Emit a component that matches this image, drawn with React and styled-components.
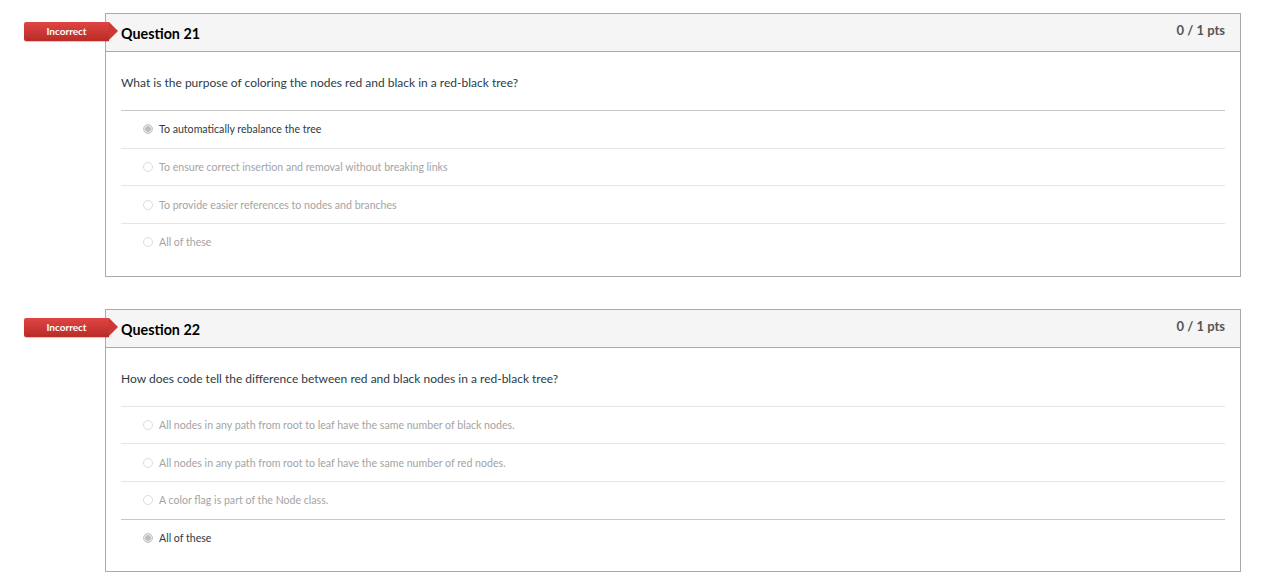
import React from "react";
import styled, { createGlobalStyle } from "styled-components";

const GlobalStyle = createGlobalStyle`
	body {
		margin: 0;
		background: #fff;
		font-family: Lato, "Liberation Sans", sans-serif;
		color: #2d3b45;
	}
`;

const Page = styled.div`
	padding: 13px 20px 12px 105px;
	display: flex;
	flex-direction: column;
	gap: 32px;
`;

const Box = styled.div`
	position: relative;
	border: 1px solid #aaaaaa;
	background: #fff;
`;

const Header = styled.div`
	height: 37px;
	border-bottom: 1px solid #aaaaaa;
	background: #f5f5f5;
	display: flex;
	justify-content: space-between;
	padding: 0 15px;
`;

const Title = styled.h2`
	margin: 0;
	padding-top: 12px;
	font-size: 14.3px;
	font-weight: 700;
	line-height: 16px;
	color: #000;
`;

const Points = styled.div`
	padding-top: 8px;
	font-size: 13px;
	font-weight: 700;
	line-height: 16px;
	color: #555;
`;

const Badge = styled.div`
	position: absolute;
	left: -82px;
	top: 8px;
	width: 85px;
	height: 19px;
	background: linear-gradient(#e04543, #b92b28);
	color: #fff;
	font-size: 10px;
	font-weight: 700;
	line-height: 18px;
	text-align: center;
	border-radius: 2px 0 0 2px;
	box-shadow: 0 1px 1px rgba(0, 0, 0, 0.2);

	&::after {
		content: "";
		position: absolute;
		right: -9px;
		top: 0;
		border-top: 9.5px solid transparent;
		border-bottom: 9.5px solid transparent;
		border-left: 9px solid #cd3835;
	}
`;

const Body = styled.div`
	padding: 22px 15px 15px;
`;

const Prompt = styled.p`
	margin: 0 0 18px;
	font-size: 12px;
	line-height: 18px;
	color: #2d3b45;
`;

const Answer = styled.div`
	height: 36.67px;
	border-top: 1px solid ${(p) => (p.$selected ? "#c8c8c8" : "#e6e6e6")};
	display: flex;
	align-items: center;
	padding-left: 22px;
	gap: 6px;
	font-size: 10.6px;
	color: ${(p) => (p.$selected ? "#2d3b45" : "#a4a4a4")};
`;

const Radio = styled.span`
	width: 10px;
	height: 10px;
	border-radius: 50%;
	box-sizing: border-box;
	border: 1px solid ${(p) => (p.$selected ? "#c4c4c4" : "#dcdcdc")};
	background: ${(p) => (p.$selected ? "radial-gradient(circle, #bdbdbd 0 2.5px, #e4e4e4 3px)" : "#fff")};
	flex-shrink: 0;
`;

const questions = [
	{
		n: 21,
		text: "What is the purpose of coloring the nodes red and black in a red-black tree?",
		answers: [
			"To automatically rebalance the tree",
			"To ensure correct insertion and removal without breaking links",
			"To provide easier references to nodes and branches",
			"All of these",
		],
		selected: 0,
	},
	{
		n: 22,
		text: "How does code tell the difference between red and black nodes in a red-black tree?",
		answers: [
			"All nodes in any path from root to leaf have the same number of black nodes.",
			"All nodes in any path from root to leaf have the same number of red nodes.",
			"A color flag is part of the Node class.",
			"All of these",
		],
		selected: 3,
	},
];

const App = () => (
	<>
		<GlobalStyle />
		<Page>
			{questions.map((q) => (
				<Box key={q.n}>
					<Badge>Incorrect</Badge>
					<Header>
						<Title>Question {q.n}</Title>
						<Points>0 / 1 pts</Points>
					</Header>
					<Body>
						<Prompt>{q.text}</Prompt>
						{q.answers.map((a, i) => (
							<Answer key={a} $selected={i === q.selected}>
								<Radio $selected={i === q.selected} />
								{a}
							</Answer>
						))}
					</Body>
				</Box>
			))}
		</Page>
	</>
);

export default App;
